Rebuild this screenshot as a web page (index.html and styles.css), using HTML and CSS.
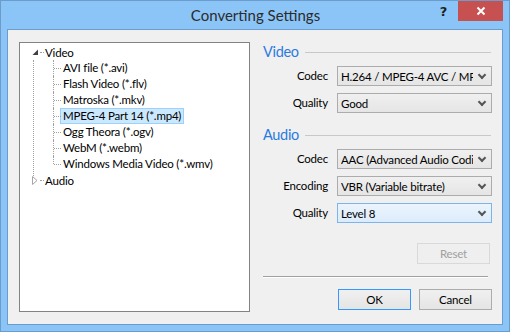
FILE: index.html
```html
<!DOCTYPE html>
<html>
<head>
<meta charset="utf-8">
<link rel="stylesheet" href="styles.css">
</head>
<body>
<div class="window">
  <div class="titlebar">
    <div class="title">Converting Settings</div>
    <div class="help">?</div>
    <div class="close">
      <svg width="10" height="10" viewBox="0 0 10 10"><path d="M1.5 1.5 L8.5 8.5 M8.5 1.5 L1.5 8.5" stroke="#fff" stroke-width="2" fill="none"/></svg>
    </div>
  </div>
  <div class="client">
    <div class="tree">
      <div class="node root expanded">
        <span class="toggle">
          <svg width="7" height="7" viewBox="0 0 7 7"><path d="M6 0.5 L6 6 L0.5 6 Z" fill="#404040"/></svg>
        </span>
        <span class="label">Video</span>
      </div>
      <div class="children">
        <div class="node child"><span class="label">AVI file (*.avi)</span></div>
        <div class="node child"><span class="label">Flash Video (*.flv)</span></div>
        <div class="node child"><span class="label">Matroska (*.mkv)</span></div>
        <div class="node child"><span class="label selected">MPEG-4 Part 14 (*.mp4)</span></div>
        <div class="node child"><span class="label">Ogg Theora (*.ogv)</span></div>
        <div class="node child"><span class="label">WebM (*.webm)</span></div>
        <div class="node child last"><span class="label">Windows Media Video (*.wmv)</span></div>
      </div>
      <div class="node root collapsed">
        <span class="toggle">
          <svg width="6" height="9" viewBox="0 0 6 9"><path d="M0.5 0.5 L5 4.5 L0.5 8.5 Z" fill="none" stroke="#a6a6a6" stroke-width="1"/></svg>
        </span>
        <span class="label">Audio</span>
      </div>
    </div>
    <div class="panel">
      <div class="group-title"><span>Video</span><div class="rule"></div></div>
      <div class="form">
        <div class="flabel">Codec</div>
        <div class="combo"><span class="val">H.264 / MPEG-4 AVC / MPEG-4 Part 10</span><span class="chev"></span></div>
        <div class="flabel">Quality</div>
        <div class="combo"><span class="val">Good</span><span class="chev"></span></div>
      </div>
      <div class="group-title audio"><span>Audio</span><div class="rule"></div></div>
      <div class="form">
        <div class="flabel">Codec</div>
        <div class="combo"><span class="val">AAC (Advanced Audio Coding)</span><span class="chev"></span></div>
        <div class="flabel">Encoding</div>
        <div class="combo"><span class="val">VBR (Variable bitrate)</span><span class="chev"></span></div>
        <div class="flabel">Quality</div>
        <div class="combo focus"><span class="val">Level 8</span><span class="chev"></span></div>
      </div>
      <div class="reset-row"><button class="btn disabled">Reset</button></div>
      <div class="sep"></div>
      <div class="buttons">
        <button class="btn default">OK</button>
        <button class="btn">Cancel</button>
      </div>
    </div>
  </div>
</div>
</body>
</html>
```
FILE: styles.css
```css
* { box-sizing: border-box; }
html, body { margin: 0; padding: 0; }
body {
  width: 510px;
  height: 332px;
  overflow: hidden;
  font-family: Lato, "Noto Sans", sans-serif;
  font-size: 11.5px;
  letter-spacing: -0.2px;
  color: #000;
}
.window {
  width: 510px;
  height: 332px;
  background: #8bc5f8;
  border: 1px solid #6b9ccb;
  padding: 0 6px 6px 6px;
  display: flex;
  flex-direction: column;
}
.titlebar {
  height: 28px;
  position: relative;
  display: flex;
  align-items: center;
  justify-content: center;
}
.title {
  font-size: 15px;
  letter-spacing: 0;
  color: #2b2b2b;
  margin-left: 1px;
}
.help {
  position: absolute;
  right: 56px;
  top: 3px;
  font-family: "DejaVu Sans", sans-serif;
  font-weight: bold;
  font-size: 13px;
  color: #1f1f1f;
}
.close {
  position: absolute;
  right: 0;
  top: 0;
  width: 45px;
  height: 20px;
  background: #c75050;
  display: flex;
  align-items: center;
  justify-content: center;
}
.client {
  flex: 1;
  background: #f0f0f0;
  border: 1px solid #6b9ccb;
  padding: 12px 10px 12px 11px;
  display: flex;
}
.tree {
  width: 231px;
  height: 270px;
  background: #fff;
  border: 1px solid #838383;
  padding-top: 1px;
  position: relative;
}
.node {
  height: 16px;
  display: flex;
  align-items: center;
  position: relative;
}
.root { padding-left: 11px; }
.toggle {
  width: 8px;
  height: 16px;
  display: flex;
  align-items: center;
  justify-content: center;
}
.root .label { margin-left: 6px; position: relative; }
.root::after {
  content: "";
  position: absolute;
  left: 20px;
  width: 4px;
  top: 8px;
  border-top: 1px dotted #a0a0a0;
}
.children {
  position: relative;
}
.children::before {
  content: "";
  position: absolute;
  left: 13px;
  top: 0;
  bottom: -6px;
  border-left: 1px dotted #a0a0a0;
}
.child { padding-left: 40px; }
.child::before {
  content: "";
  position: absolute;
  left: 33px;
  top: 0;
  height: 16px;
  border-left: 1px dotted #a0a0a0;
}
.child.last::before { height: 8px; }
.child::after {
  content: "";
  position: absolute;
  left: 34px;
  width: 7px;
  top: 8px;
  border-top: 1px dotted #a0a0a0;
}
.child .label {
  padding: 0 2px;
  height: 16px;
  line-height: 14px;
  border: 1px solid transparent;
}
.child .label.selected {
  background: #cce8ff;
  border-color: #99d1ff;
}
.panel {
  margin-left: 13px;
  width: 229px;
  display: flex;
  flex-direction: column;
}
.group-title {
  height: 19px;
  display: flex;
  align-items: center;
  color: #2a7ae0;
  font-size: 14.5px;
  letter-spacing: -0.3px;
}
.group-title .rule {
  flex: 1;
  margin-left: 6px;
  margin-right: 1px;
  margin-top: 2px;
  border-top: 1px solid #c8c8c8;
}
.group-title.audio { margin-top: 12px; }
.form {
  margin-top: 5px;
  display: grid;
  grid-template-columns: 65px 155px;
  column-gap: 9px;
  row-gap: 7px;
  align-items: center;
}
.flabel {
  text-align: right;
  line-height: 20px;
}
.combo {
  height: 20px;
  border: 1px solid #acacac;
  background: linear-gradient(#f0f0f0, #e5e5e5);
  display: flex;
  align-items: center;
  padding-left: 3px;
  overflow: hidden;
}
.combo.focus {
  border-color: #7eb4ea;
  background: linear-gradient(#ecf4fc, #dcecfc);
}
.val {
  flex: 1;
  white-space: nowrap;
  overflow: hidden;
}
.chev {
  width: 18px;
  height: 18px;
  flex: none;
  position: relative;
}
.chev::after {
  content: "";
  position: absolute;
  left: 6px;
  top: 5px;
  width: 4px;
  height: 4px;
  border-right: 2px solid #555;
  border-bottom: 2px solid #555;
  transform: rotate(45deg);
}
.reset-row {
  margin-top: 20px;
  display: flex;
  justify-content: flex-end;
  padding-right: 2px;
}
.btn {
  font-family: inherit;
  font-size: 11.5px;
  letter-spacing: -0.2px;
  height: 21px;
  width: 73px;
  border: 1px solid #acacac;
  background: linear-gradient(#f0f0f0, #e5e5e5);
  color: #000;
  padding: 0;
  margin: 0;
}
.btn.disabled {
  border-color: #d9d9d9;
  background: #efefef;
  color: #a0a0a0;
}
.btn.default { border-color: #3399ff; }
.sep {
  margin-top: 12px;
  width: 225px;
  border-top: 1px solid #a0a0a0;
  border-bottom: 1px solid #fff;
}
.buttons {
  margin-top: 11px;
  display: flex;
  justify-content: flex-end;
  gap: 8px;
}
```
